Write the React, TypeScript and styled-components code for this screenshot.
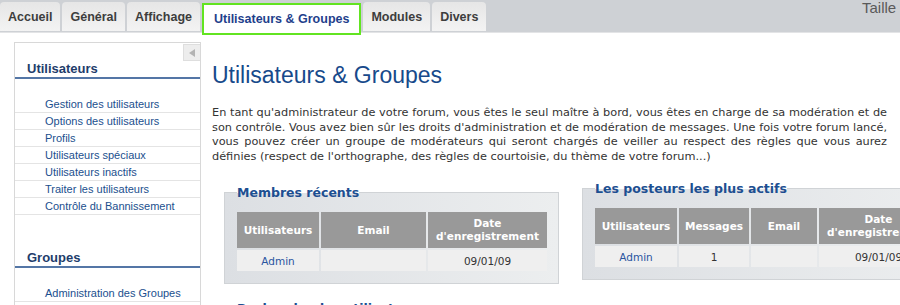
import React from "react";
import styled, { createGlobalStyle } from "styled-components";

const GlobalStyle = createGlobalStyle`
  html, body {
    margin: 0;
    padding: 0;
    width: 900px;
    height: 305px;
    overflow: hidden;
    background: #ffffff;
    font-family: "Liberation Sans", Arial, sans-serif;
  }
`;

const Page = styled.div`
  width: 900px;
  height: 305px;
  overflow: hidden;
`;

const TopBar = styled.div`
  display: flex;
  align-items: flex-end;
  height: 32px;
  background: #ced1d5;
  border-bottom: 1px solid #e3e4e6;
  white-space: nowrap;
`;

const Tabs = styled.ul`
  display: flex;
  align-items: flex-end;
  gap: 2px;
  margin: 0;
  padding: 0;
  list-style: none;
`;

const Tab = styled.li<{ $active?: boolean }>`
  position: relative;
  display: flex;
  align-items: center;
  height: ${(p) => (p.$active ? "32px" : "29px")};
  margin-bottom: ${(p) => (p.$active ? "-3px" : "1px")};
  padding: 0 ${(p) => (p.$active ? "10px" : "8px")};
  box-sizing: border-box;
  border: ${(p) => (p.$active ? "2px solid #62e421" : "none")};
  border-radius: ${(p) => (p.$active ? "0" : "4px 4px 0 0")};
  background: ${(p) =>
    p.$active ? "#ffffff" : "linear-gradient(#e6e6e6, #f3f3f3)"};
  color: ${(p) => (p.$active ? "#1f3f8c" : "#3d3d3d")};
  font-size: 12.5px;
  font-weight: bold;
  cursor: pointer;
`;

/* only the start of this label fits in the window */
const FontSizeLabel = styled.span`
  flex: none;
  align-self: flex-start;
  width: 38px;
  margin-left: auto;
  margin-top: -1px;
  color: #5a5a5a;
  font-size: 15px;
`;

const Content = styled.div`
  display: flex;
  align-items: flex-start;
  padding: 9px 0 0 14px;
`;

const Sidebar = styled.div`
  flex: none;
  width: 187px;
  min-height: 280px;
  box-sizing: border-box;
  border: 1px solid #d8d8d8;
  border-bottom: none;
`;

const CollapseButton = styled.div`
  float: right;
  display: flex;
  align-items: center;
  justify-content: center;
  width: 17px;
  height: 17px;
  box-sizing: border-box;
  margin-top: 1px;
  background: #ededed;
  border: 1px solid #dedede;
  border-right: none;

  &::before {
    content: "";
    width: 0;
    height: 0;
    border-top: 4px solid transparent;
    border-bottom: 4px solid transparent;
    border-right: 6px solid #b3b3b3;
  }
`;

const SideSection = styled.div<{ $gap: number }>`
  padding-top: ${(p) => p.$gap}px;
`;

const SideHeading = styled.h3`
  margin: 0;
  padding: 0 12px;
  height: 16px;
  line-height: 16px;
  border-bottom: 2px solid #5476a6;
  color: #1e3d6b;
  font-size: 13px;
  font-weight: bold;
`;

const SideList = styled.ul`
  margin: 17px 0 0;
  padding: 0;
  list-style: none;
`;

const SideItem = styled.li`
  height: 16px;
  padding-left: 30px;
  border-bottom: 1px solid #e4e4e4;
  line-height: 16px;
  font-size: 11px;
  color: #1b4f8e;
`;

const Main = styled.div`
  flex: none;
  width: 675px;
  margin-left: 11px;
`;

const Title = styled.h1`
  margin: 20px 0 0;
  color: #174a8b;
  font-size: 23px;
  font-weight: normal;
  line-height: 26px;
`;

const Intro = styled.p`
  margin: 18px 0 0;
  color: #333333;
  font-family: "DejaVu Sans", Verdana, sans-serif;
  font-size: 11.3px;
  line-height: 14.5px;
  text-align: justify;
`;

const BoxRow = styled.div`
  display: flex;
  align-items: flex-start;
  gap: 23px;
  margin: 17px 0 0 12px;
  width: 800px;
`;

const StatBox = styled.fieldset<{ $offset?: number }>`
  flex: none;
  margin: ${(p) => p.$offset ?? 0}px 0 0;
  padding: 12px 11px 12px 12px;
  border: 1px solid #d0d3d6;
  background: linear-gradient(to right, #dcdfe3, #eceeef);
  min-inline-size: auto;
`;

const BoxTitle = styled.legend`
  padding: 0;
  color: #1d4f91;
  font-family: "DejaVu Sans", Verdana, sans-serif;
  font-size: 12.5px;
  font-weight: bold;
  line-height: 15px;
`;

const DataTable = styled.table`
  border-collapse: separate;
  border-spacing: 2px;
  margin: -2px;
  font-family: "DejaVu Sans", Verdana, sans-serif;
  font-size: 10.5px;
`;

const HeadCell = styled.th<{ $w: number }>`
  width: ${(p) => p.$w}px;
  height: 36px;
  padding: 0 3px;
  box-sizing: border-box;
  background: #999999;
  color: #ffffff;
  font-weight: bold;
  line-height: 13px;
  text-align: center;
`;

const Cell = styled.td<{ $link?: boolean }>`
  height: 21px;
  padding: 0 3px;
  box-sizing: border-box;
  background: #efefef;
  color: ${(p) => (p.$link ? "#2a55a0" : "#333333")};
  text-align: center;
`;

const tabs = [
  "Accueil",
  "Général",
  "Affichage",
  "Utilisateurs & Groupes",
  "Modules",
  "Divers",
];

const userLinks = [
  "Gestion des utilisateurs",
  "Options des utilisateurs",
  "Profils",
  "Utilisateurs spéciaux",
  "Utilisateurs inactifs",
  "Traiter les utilisateurs",
  "Contrôle du Bannissement",
];

const App = () => {
  return (
    <Page>
      <GlobalStyle />
      <TopBar>
        <Tabs>
          {tabs.map((t) => (
            <Tab key={t} $active={t === "Utilisateurs & Groupes"}>
              {t}
            </Tab>
          ))}
        </Tabs>
        <FontSizeLabel>Taille du texte</FontSizeLabel>
      </TopBar>

      <Content>
        <Sidebar>
          <CollapseButton />
          <SideSection $gap={18}>
            <SideHeading>Utilisateurs</SideHeading>
            <SideList>
              {userLinks.map((l) => (
                <SideItem key={l}>{l}</SideItem>
              ))}
            </SideList>
          </SideSection>
          <SideSection $gap={35}>
            <SideHeading>Groupes</SideHeading>
            <SideList>
              <SideItem>Administration des Groupes</SideItem>
            </SideList>
          </SideSection>
        </Sidebar>

        <Main>
          <Title>Utilisateurs &amp; Groupes</Title>
          <Intro>
            En tant qu'administrateur de votre forum, vous êtes le seul maître à
            bord, vous êtes en charge de sa modération et de son contrôle. Vous
            avez bien sûr les droits d'administration et de modération de
            messages. Une fois votre forum lancé, vous pouvez créer un groupe de
            modérateurs qui seront chargés de veiller au respect des règles que
            vous aurez définies (respect de l'orthographe, des règles de
            courtoisie, du thème de votre forum...)
          </Intro>

          <BoxRow>
            <StatBox $offset={4}>
              <BoxTitle>Membres récents</BoxTitle>
              <DataTable>
                <thead>
                  <tr>
                    <HeadCell $w={82}>Utilisateurs</HeadCell>
                    <HeadCell $w={105}>Email</HeadCell>
                    <HeadCell $w={119}>
                      Date
                      <br />
                      d'enregistrement
                    </HeadCell>
                  </tr>
                </thead>
                <tbody>
                  <tr>
                    <Cell $link>Admin</Cell>
                    <Cell />
                    <Cell>09/01/09</Cell>
                  </tr>
                </tbody>
              </DataTable>
            </StatBox>

            <StatBox>
              <BoxTitle>Les posteurs les plus actifs</BoxTitle>
              <DataTable>
                <thead>
                  <tr>
                    <HeadCell $w={82}>Utilisateurs</HeadCell>
                    <HeadCell $w={70}>Messages</HeadCell>
                    <HeadCell $w={66}>Email</HeadCell>
                    <HeadCell $w={119}>
                      Date
                      <br />
                      d'enregistrement
                    </HeadCell>
                  </tr>
                </thead>
                <tbody>
                  <tr>
                    <Cell $link>Admin</Cell>
                    <Cell>1</Cell>
                    <Cell />
                    <Cell>09/01/09</Cell>
                  </tr>
                </tbody>
              </DataTable>
            </StatBox>
          </BoxRow>

          <BoxRow>
            <StatBox>
              <BoxTitle>Recherche des utilisateurs</BoxTitle>
            </StatBox>
          </BoxRow>
        </Main>
      </Content>
    </Page>
  );
};

export default App;
